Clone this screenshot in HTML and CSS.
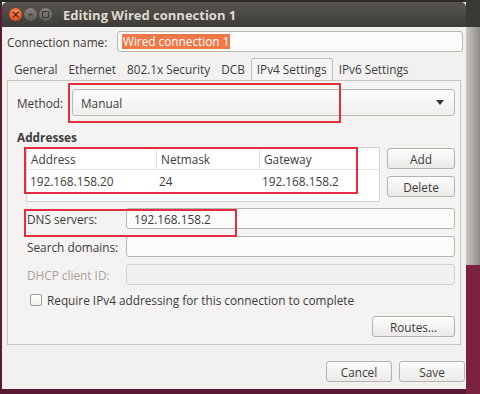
FILE: index.html
```
<!DOCTYPE html>
<html lang="en">
<head>
    <meta charset="UTF-8">
    <title>Editing Wired connection 1</title>
    <link rel="stylesheet" href="styles.css">
</head>
<body>
<div class="desktop">
    <div class="window">
        <div class="titlebar">
            <div class="win-btns">
                <span class="wbtn close">&#215;</span>
                <span class="wbtn">&#8211;</span>
                <span class="wbtn max"><i></i></span>
            </div>
            <div class="title">Editing Wired connection 1</div>
        </div>
        <div class="win-body">
            <div class="name-row">
                <label class="name-label">Connection name:</label>
                <div class="entry name-entry"><span class="selected">Wired connection 1</span></div>
            </div>
            <div class="tabs">
                <span class="tab">General</span>
                <span class="tab">Ethernet</span>
                <span class="tab">802.1x Security</span>
                <span class="tab">DCB</span>
                <span class="tab active">IPv4 Settings</span>
                <span class="tab">IPv6 Settings</span>
            </div>
            <div class="pane">
                <div class="method-row">
                    <label class="method-label">Method:</label>
                    <div class="combo">
                        <span>Manual</span>
                        <svg width="8" height="5" viewBox="0 0 8 5"><path d="M0 0h8L4 5z" fill="#3c3c3c"/></svg>
                    </div>
                </div>
                <div class="section-title">Addresses</div>
                <div class="addr-row">
                    <div class="tree">
                        <div class="tree-head">
                            <span class="col c1">Address</span>
                            <span class="col c2">Netmask</span>
                            <span class="col c3">Gateway</span>
                        </div>
                        <div class="tree-line">
                            <span class="col c1">192.168.158.20</span>
                            <span class="col c2">24</span>
                            <span class="col c3">192.168.158.2</span>
                        </div>
                    </div>
                    <div class="side-btns">
                        <button class="btn">Add</button>
                        <button class="btn">Delete</button>
                    </div>
                </div>
                <div class="field-row">
                    <label class="field-label">DNS servers:</label>
                    <div class="entry field-entry">192.168.158.2</div>
                </div>
                <div class="field-row">
                    <label class="field-label">Search domains:</label>
                    <div class="entry field-entry"></div>
                </div>
                <div class="field-row disabled">
                    <label class="field-label">DHCP client ID:</label>
                    <div class="entry field-entry"></div>
                </div>
                <div class="check-row">
                    <span class="checkbox"></span>
                    <span>Require IPv4 addressing for this connection to complete</span>
                </div>
                <div class="routes-row">
                    <button class="btn routes">Routes&#8230;</button>
                </div>
                <div class="mark mark-method"></div>
                <div class="mark mark-addr"></div>
                <div class="mark mark-dns"></div>
            </div>
            <div class="actions">
                <button class="btn act">Cancel</button>
                <button class="btn act">Save</button>
            </div>
        </div>
    </div>
    <div class="side-strip">
        <div class="strip-top"></div>
        <div class="strip-mid"></div>
        <div class="strip-low"></div>
    </div>
</div>
</body>
</html>
```
FILE: styles.css
```
body {
    margin: 0;
    font-family: "Open Sans", "DejaVu Sans", sans-serif;
    font-size: 11.8px;
    color: #3c3c3c;
    background-color: #4a1233;
}
.desktop {
    display: flex;
    width: 480px;
    height: 394px;
    overflow: hidden;
    background: linear-gradient(#2c2a27 0, #2c2a27 6px, #5b1a34 6px);
}
.window {
    width: 464px;
    height: 387px;
    margin: 2px 0 0 2px;
    background-color: #f2f1f0;
    display: flex;
    flex-direction: column;
}
.titlebar {
    height: 25px;
    flex-shrink: 0;
    background: linear-gradient(#58554f, #3d3b37);
    border-radius: 5px 5px 0 0;
    display: flex;
    align-items: center;
}
.win-btns {
    display: flex;
    gap: 2px;
    margin-left: 7px;
}
.wbtn {
    width: 13px;
    height: 13px;
    border-radius: 50%;
    background: linear-gradient(#85827c, #5e5b56);
    color: #3a3935;
    font-size: 11px;
    font-weight: bold;
    line-height: 13px;
    text-align: center;
    font-family: "DejaVu Sans", sans-serif;
}
.wbtn.close {
    background: radial-gradient(circle at 50% 35%, #fa9363, #e0521f 70%, #b23d14);
    color: #5a1c08;
}
.wbtn.max {
    display: flex;
    align-items: center;
    justify-content: center;
}
.wbtn.max i {
    width: 5px;
    height: 5px;
    border: 1px solid #3a3935;
}
.title {
    margin-left: 11px;
    color: #dfdbd2;
    font-weight: bold;
    font-size: 13px;
}
.win-body {
    flex: 1;
    padding: 4px 3px 0 5px;
    display: flex;
    flex-direction: column;
}
.name-row {
    display: flex;
    align-items: center;
    height: 21px;
}
.name-label {
    width: 110px;
}
.entry {
    background-color: #fbfbfb;
    border: 1px solid #b9b6b0;
    border-radius: 3px;
    box-sizing: border-box;
    display: flex;
    align-items: center;
    padding-left: 4px;
}
.name-entry {
    flex: 1;
    height: 21px;
}
.selected {
    background-color: #f07746;
    color: #ffffff;
    padding: 0 1px;
    line-height: 15px;
}
.tabs {
    display: flex;
    height: 22px;
    margin-top: 6px;
    padding-left: 2px;
}
.tab {
    padding: 0 5px;
    margin-right: 1px;
    line-height: 22px;
}
.tab.active {
    border: 1px solid #c2bfb9;
    border-bottom: none;
    border-radius: 3px 3px 0 0;
    background-color: #f5f4f3;
    line-height: 21px;
    height: 22px;
    box-sizing: border-box;
}
.pane {
    position: relative;
    width: 454px;
    height: 265px;
    box-sizing: border-box;
    border: 1px solid #c8c5bf;
    background-color: #f4f3f2;
    padding: 8px 5px 0 9px;
}
.method-row {
    display: flex;
    align-items: center;
}
.method-label {
    width: 55px;
}
.combo {
    flex: 1;
    height: 27px;
    box-sizing: border-box;
    border: 1px solid #bcb9b3;
    border-radius: 3px;
    background: linear-gradient(#fdfdfc, #f0efed);
    display: flex;
    align-items: center;
    justify-content: space-between;
    padding: 0 10px 0 8px;
}
.section-title {
    font-weight: bold;
    margin-top: 14px;
    line-height: 14px;
}
.addr-row {
    display: flex;
    margin-top: 3px;
    padding-left: 9px;
}
.tree {
    width: 354px;
    height: 55px;
    box-sizing: border-box;
    border: 1px solid #d5d2cc;
    background-color: #ffffff;
}
.tree-head, .tree-line {
    display: flex;
    height: 21px;
    align-items: center;
}
.tree-head {
    border-bottom: 1px solid #e6e4e0;
}
.tree-head .col + .col {
    border-left: 1px solid #e0ded9;
}
.col {
    padding-left: 4px;
    box-sizing: border-box;
    height: 100%;
    display: flex;
    align-items: center;
}
.c1 { width: 129px; }
.c2 { width: 103px; }
.c3 { flex: 1; }
.tree-line .col {
    padding-left: 3px;
}
.side-btns {
    display: flex;
    flex-direction: column;
    gap: 7px;
    margin: 1px 0 0 7px;
}
.btn {
    font-family: inherit;
    font-size: 11.8px;
    color: #3c3c3c;
    border: 1px solid #b6b2ac;
    border-radius: 3px;
    background: linear-gradient(#fcfcfb, #ebeae8);
    height: 21px;
    padding: 0;
}
.side-btns .btn {
    width: 68px;
}
.field-row {
    display: flex;
    align-items: center;
    height: 21px;
    padding-left: 10px;
    margin-top: 7px;
}
.addr-row + .field-row {
    margin-top: 6px;
}
.field-label {
    width: 99px;
}
.field-entry {
    flex: 1;
    height: 21px;
    padding-left: 7px;
}
.disabled .field-label {
    color: #a5a29d;
}
.disabled .field-entry {
    background-color: #f1f0ef;
    border-color: #d3d0cb;
}
.check-row {
    display: flex;
    align-items: center;
    gap: 5px;
    margin-top: 8px;
    padding-left: 13px;
    height: 14px;
}
.checkbox {
    width: 12px;
    height: 12px;
    box-sizing: border-box;
    border: 1px solid #9f9b95;
    border-radius: 2px;
    background: linear-gradient(#ffffff, #efeeec);
}
.routes-row {
    display: flex;
    justify-content: flex-end;
    margin-top: 9px;
}
.routes {
    width: 83px;
}
.actions {
    display: flex;
    justify-content: flex-end;
    gap: 7px;
    margin: 16px -2px 0 0;
}
.act {
    width: 66px;
}
.mark {
    position: absolute;
    border: 2px solid #e0303f;
    box-sizing: border-box;
}
.mark-method {
    left: 60px;
    top: 2px;
    width: 273px;
    height: 40px;
}
.mark-addr {
    left: 16px;
    top: 66px;
    width: 334px;
    height: 47px;
}
.mark-dns {
    left: 16px;
    top: 128px;
    width: 213px;
    height: 28px;
}
.side-strip {
    flex: 1;
    display: flex;
    flex-direction: column;
}
.strip-top {
    height: 27px;
    background-color: #3a3834;
}
.strip-mid {
    height: 238px;
    background: linear-gradient(90deg, #c9c7c3, #8e8a85);
}
.strip-low {
    flex: 1;
    background-color: #7a2140;
}
```
